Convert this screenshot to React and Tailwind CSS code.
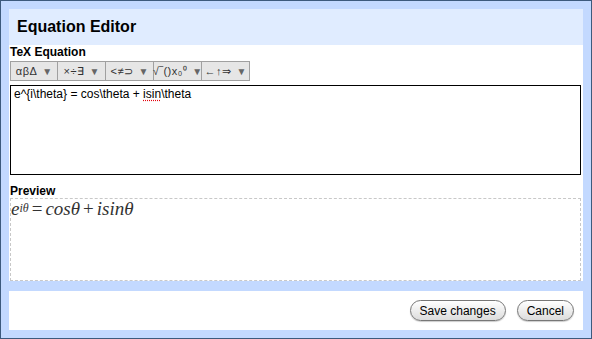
import React from 'react';

const tools = [
  { label: 'αβΔ' },
  { label: '×÷∃' },
  { label: '<≠⊃' },
  { label: '√‾()x₀⁰' },
  { label: '←↑⇒' },
];

function ToolButton({ label }) {
  return (
    <div className="w-[49px] h-[20px] flex items-center justify-center gap-[5px] bg-[#e6e6e6] border border-[#a0a0a0] -ml-px first:ml-0 first:w-[48px] text-[11px] text-[#333]">
      <span className="tracking-[0.5px]">{label}</span>
      <span className="text-[10px] text-[#666]">▼</span>
    </div>
  );
}

function PillButton({ children }) {
  return (
    <button className="h-[21px] px-[9px] rounded-full border border-[#777] bg-gradient-to-b from-white to-[#dcdcdc] text-[12px] text-black shadow-[0_1px_1px_rgba(0,0,0,0.2)]">
      {children}
    </button>
  );
}

export default function App() {
  return (
    <div className="w-[592px] h-[339px] bg-[#c3d9ff] border border-[#3d5a7d] p-[8px] font-['Liberation_Sans',Arial,sans-serif] flex flex-col">
      {/* title */}
      <div className="h-[36px] bg-[#e0ecff] flex items-center px-[8px]">
        <h1 className="text-[16px] font-bold text-black">Equation Editor</h1>
      </div>

      {/* body */}
      <div className="bg-white h-[236px] px-[1px] flex flex-col">
        <div className="text-[12px] font-bold leading-[15px]">TeX Equation</div>
        <div className="flex mt-[1px]">
          {tools.map((t) => (
            <ToolButton key={t.label} label={t.label} />
          ))}
        </div>
        <div className="mt-[4px] mr-[1px] h-[90px] border border-black px-[3px] pt-[1px] text-[12px] leading-[15px] text-black">
          e^{'{'}i\theta{'}'} = cos\theta +{' '}
          <span className="underline decoration-dotted decoration-red-600 underline-offset-2">isin</span>
          \theta
        </div>
        <div className="text-[12px] font-bold mt-[9px] leading-[14px]">Preview</div>
        <div className="flex-1 border border-dashed border-[#c8c8c8] mr-[1px] font-['Liberation_Serif','Times_New_Roman',serif] italic text-[19px] leading-[19px] text-[#333]">
          e<sup className="text-[12px] relative -top-[3px]">iθ</sup>
          <span className="not-italic mx-[3px]">=</span>cosθ
          <span className="not-italic mx-[3px]">+</span>isinθ
        </div>
      </div>

      <div className="h-[10px]" />

      {/* footer */}
      <div className="bg-white flex-1 flex items-center justify-end gap-[11px] pr-[9px]">
        <PillButton>Save changes</PillButton>
        <PillButton>Cancel</PillButton>
      </div>
    </div>
  );
}
